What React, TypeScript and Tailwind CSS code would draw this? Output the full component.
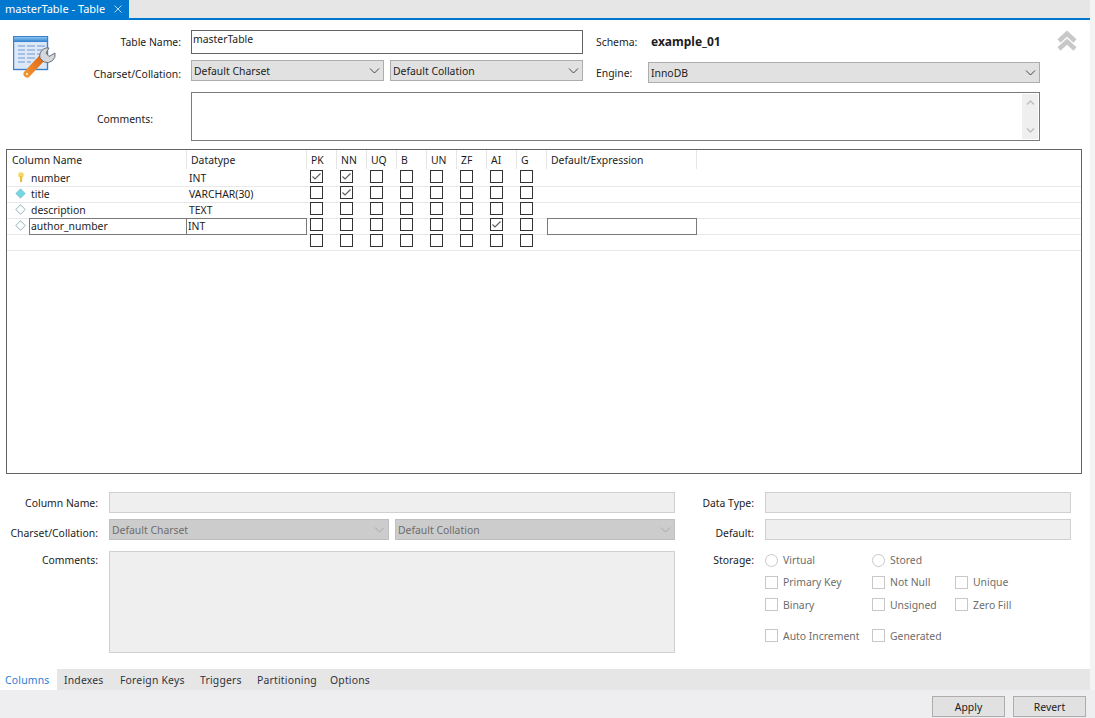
const FLAGS = ['PK', 'NN', 'UQ', 'B', 'UN', 'ZF', 'AI', 'G'];

const ROWS = [
  { name: 'number', type: 'INT', icon: 'key', checked: ['PK', 'NN'] },
  { name: 'title', type: 'VARCHAR(30)', icon: 'filled', checked: ['NN'] },
  { name: 'description', type: 'TEXT', icon: 'hollow', checked: [] },
  { name: 'author_number', type: 'INT', icon: 'hollow', checked: ['AI'], editing: true },
  { name: '', type: '', icon: '', checked: [] },
];

const TABS = [
  { label: 'Columns', cls: 'w-[57px] pl-[5px] bg-white text-[#2b7cd3]' },
  { label: 'Indexes', cls: 'w-[56px] pl-[7px]' },
  { label: 'Foreign Keys', cls: 'w-[80px] pl-[7px]' },
  { label: 'Triggers', cls: 'w-[57px] pl-[7px]' },
  { label: 'Partitioning', cls: 'w-[73px] pl-[7px]' },
  { label: 'Options', cls: 'w-[60px] pl-[7px]' },
];

function Chevron({ color = '#444' }: { color?: string }) {
  return (
    <svg width="11" height="6" viewBox="0 0 11 6" fill="none" stroke={color} strokeWidth="1">
      <path d="M1 0.5 L5.5 5 L10 0.5" />
    </svg>
  );
}

function Select({ label, cls, disabled }: { label: string; cls: string; disabled?: boolean }) {
  return (
    <div
      className={`flex h-[21px] items-center justify-between border pl-[2px] pr-[3px] ${cls} ${
        disabled ? 'border-[#bfbfbf] bg-[#cccccc] text-[#6d6d6d]' : 'border-[#adadad] bg-[#e1e1e1]'
      }`}
    >
      <span>{label}</span>
      <Chevron color={disabled ? '#a8a8a8' : '#444'} />
    </div>
  );
}

function CheckBox({ checked }: { checked?: boolean }) {
  return (
    <div className="h-[13px] w-[13px] border border-[#333333] bg-white">
      {checked && (
        <svg width="11" height="11" viewBox="0 0 11 11" fill="none" stroke="#606060" strokeWidth="1.2">
          <path d="M1.5 5.5 L4 8 L9.5 2.5" />
        </svg>
      )}
    </div>
  );
}

function RowIcon({ kind }: { kind: string }) {
  if (kind === 'key') {
    return (
      <svg width="10" height="11" viewBox="0 0 10 11">
        <circle cx="5" cy="3" r="2.8" fill="#f8d860" />
        <rect x="4" y="4" width="2.2" height="6" fill="#e8c040" />
      </svg>
    );
  }
  if (kind === 'filled') {
    return (
      <svg width="11" height="11" viewBox="0 0 11 11">
        <path d="M5.5 0.8 L10.2 5.5 L5.5 10.2 L0.8 5.5 Z" fill="#70d8e4" stroke="#90bcc8" strokeWidth="0.8" />
      </svg>
    );
  }
  if (kind === 'hollow') {
    return (
      <svg width="11" height="11" viewBox="0 0 11 11">
        <path d="M5.5 0.8 L10.2 5.5 L5.5 10.2 L0.8 5.5 Z" fill="#ffffff" stroke="#86a8b4" strokeWidth="0.9" />
      </svg>
    );
  }
  return null;
}

function TableIcon() {
  return (
    <svg width="44" height="44" viewBox="0 0 44 44">
      <defs>
        <linearGradient id="bar" x1="0" y1="0" x2="0" y2="1">
          <stop offset="0" stopColor="#8cc4f0" />
          <stop offset="1" stopColor="#2f7fd0" />
        </linearGradient>
        <linearGradient id="handle" x1="0" y1="1" x2="1" y2="0">
          <stop offset="0" stopColor="#f09030" />
          <stop offset="1" stopColor="#e06a18" />
        </linearGradient>
      </defs>
      <rect x="0.5" y="0.5" width="34" height="33" fill="#dce8f8" stroke="#3f80cc" strokeWidth="1.4" />
      <rect x="1" y="1" width="33" height="5" fill="url(#bar)" />
      <path d="M5 9h7v2H5zM14 9h8v2h-8zM24 9h8v2h-8zM5 13h7v2H5zM14 13h8v2h-8zM24 13h8v2h-8zM5 17h7v2H5zM14 17h8v2h-8zM24 17h6v2h-6zM5 21h7v2H5zM14 21h8v2h-8zM5 25h7v2H5zM14 25h4v2h-4z" fill="#a4c0e2" />
      <path d="M14 38 L29 22" stroke="url(#handle)" strokeWidth="7" strokeLinecap="round" />
      <circle cx="14" cy="38" r="1.2" fill="#ffe0b0" />
      <path d="M27 22 A8 8 0 0 1 36 12 L33 17 L36 20.5 L42 17 A8 8 0 0 1 31 26 Z" fill="#d4d8dc" stroke="#6c7278" strokeWidth="1" />
    </svg>
  );
}

function FlagOption({ label, cls, radio, tight }: { label: string; cls: string; radio?: boolean; tight?: boolean }) {
  return (
    <div className={`flex h-[13px] items-center text-[#6d6d6d] ${cls}`}>
      <div className={`h-[13px] w-[13px] shrink-0 border border-[#c8c8c8] ${radio ? 'rounded-full' : ''}`} />
      <span className={`ml-[5px] whitespace-nowrap ${tight ? '-mt-[2px]' : ''}`}>{label}</span>
    </div>
  );
}

export default function App() {
  return (
    <div className="flex h-[718px] w-[1095px] flex-col overflow-hidden bg-[#f3f3f3] font-['Noto_Sans',sans-serif] text-[10.4px] leading-[14px] text-[#1c1c1c]">
      <div className="flex h-[690px] w-[1090px] flex-col bg-white">
        {/* document tab */}
        <div className="h-[20px] border-b-2 border-[#0078d0] bg-[#e6e6e6]">
          <div className="flex h-[18px] w-[129px] items-center bg-[#0078d0] pl-[5px] text-[11px] text-white">
            <span>masterTable - Table</span>
            <svg className="ml-[9px]" width="8" height="8" viewBox="0 0 8 8" stroke="#b8d8f0" strokeWidth="1">
              <path d="M0.5 0.5 L7.5 7.5 M7.5 0.5 L0.5 7.5" />
            </svg>
          </div>
        </div>

        {/* table header form */}
        <div className="flex pt-[10px]">
          <div className="w-[94px] shrink-0 pl-[13px] pt-[6px]">
            <TableIcon />
          </div>
          <div className="w-[87px] shrink-0 text-right">
            <div className="flex h-[24px] items-center justify-end">Table Name:</div>
            <div className="mt-[6px] flex h-[21px] items-center justify-end pt-[6px]">Charset/Collation:</div>
            <div className="mt-[11px] flex h-[49px] items-center justify-end pr-[28px] pt-[5px]">Comments:</div>
          </div>
          <div className="ml-[10px]">
            <div className="flex">
              <div className="h-[24px] w-[392px] border border-[#646464] pl-[1px] pt-[1px]">masterTable</div>
              <div className="ml-[13px] flex h-[24px] w-[55px] items-center">Schema:</div>
              <div className="flex h-[24px] items-center text-[12px] font-bold">example_01</div>
              <svg className="ml-[336px] shrink-0" width="20" height="21" viewBox="0 0 20 21" fill="none" stroke="#c8c8c8" strokeWidth="4.5">
                <path d="M2 11 L10 3.5 L18 11" />
                <path d="M2 19 L10 11.5 L18 19" />
              </svg>
            </div>
            <div className="mt-[6px] flex">
              <Select label="Default Charset" cls="w-[193px]" />
              <Select label="Default Collation" cls="ml-[6px] w-[193px]" />
              <div className="ml-[13px] mt-[2px] flex h-[21px] w-[52px] items-center pt-[1px]">Engine:</div>
              <div className="mt-[2px]">
                <Select label="InnoDB" cls="w-[392px]" />
              </div>
            </div>
            <div className="mt-[9px] flex h-[49px] w-[849px] justify-end border border-[#7a7a7a] p-[1px]">
              <div className="flex w-[16px] flex-col items-center justify-between bg-[#efefef] py-[6px]">
                <svg width="9" height="5" viewBox="0 0 9 5" fill="none" stroke="#bdbdbd" strokeWidth="1.4">
                  <path d="M1 4.5 L4.5 1 L8 4.5" />
                </svg>
                <svg width="9" height="5" viewBox="0 0 9 5" fill="none" stroke="#bdbdbd" strokeWidth="1.4">
                  <path d="M1 0.5 L4.5 4 L8 0.5" />
                </svg>
              </div>
            </div>
          </div>
        </div>

        {/* column grid */}
        <div className="ml-[6px] mt-[8px] h-[325px] w-[1076px] border border-[#646464]">
          <div className="flex h-[21px] items-start">
            <div className="flex h-[19px] w-[180px] items-center border-r border-[#e6e6e6] pl-[5px]">Column Name</div>
            <div className="flex h-[19px] w-[120px] items-center border-r border-[#e6e6e6] pl-[4px]">Datatype</div>
            {FLAGS.map((flag) => (
              <div key={flag} className="flex h-[19px] w-[30px] items-center border-r border-[#e6e6e6] pl-[4px]">
                {flag}
              </div>
            ))}
            <div className="flex h-[19px] w-[150px] items-center border-r border-[#e6e6e6] pl-[4px]">Default/Expression</div>
          </div>
          {ROWS.map((row, i) => (
            <div key={i} className="flex h-[16px] border-b border-[#e8e8e8]">
              <div className="flex w-[180px] items-start">
                <div className="flex h-[13px] w-[22px] shrink-0 items-center justify-center pl-[5px]">
                  <RowIcon kind={row.icon} />
                </div>
                {row.editing ? (
                  <div className="-mt-px h-[17px] flex-1 border border-[#7a7a7a] pl-[1px]">{row.name}</div>
                ) : (
                  <div className="pl-[2px]">{row.name}</div>
                )}
              </div>
              {row.editing ? (
                <div className="-ml-px -mt-px h-[17px] w-[121px] border border-[#7a7a7a] pl-[1px]">{row.type}</div>
              ) : (
                <div className="w-[120px] pl-[2px]">{row.type}</div>
              )}
              {FLAGS.map((flag) => (
                <div key={flag} className="-mt-px w-[30px] pl-[3px]">
                  <CheckBox checked={row.checked.includes(flag)} />
                </div>
              ))}
              {row.editing && <div className="-mt-px h-[17px] w-[150px] border border-[#7a7a7a]" />}
            </div>
          ))}
        </div>

        {/* column details form */}
        <div className="mt-[18px] flex">
          <div className="w-[675px] shrink-0">
            <div className="flex">
              <div className="flex h-[21px] w-[99px] items-center justify-end pr-[1px] pt-[1px]">Column Name:</div>
              <div className="ml-[10px] h-[21px] w-[566px] border border-[#d0d0d0] bg-[#efefef]" />
            </div>
            <div className="mt-[6px] flex">
              <div className="flex h-[21px] w-[99px] items-center justify-end pr-[1px] pt-[6px]">Charset/Collation:</div>
              <Select label="Default Charset" cls="ml-[10px] w-[280px]" disabled />
              <Select label="Default Collation" cls="ml-[6px] w-[280px]" disabled />
            </div>
            <div className="mt-[11px] flex">
              <div className="w-[99px] pr-[1px] pt-[2px] text-right">Comments:</div>
              <div className="ml-[10px] h-[102px] w-[566px] border border-[#d0d0d0] bg-[#efefef]" />
            </div>
          </div>
          <div className="flex-1">
            <div className="flex">
              <div className="flex h-[21px] w-[79px] items-center justify-end pt-[1px]">Data Type:</div>
              <div className="ml-[11px] h-[21px] w-[306px] border border-[#d0d0d0] bg-[#efefef]" />
            </div>
            <div className="mt-[6px] flex">
              <div className="flex h-[21px] w-[79px] items-center justify-end pt-[6px]">Default:</div>
              <div className="ml-[11px] h-[21px] w-[306px] border border-[#d0d0d0] bg-[#efefef]" />
            </div>
            <div className="mt-[14px] flex">
              <div className="flex h-[13px] w-[79px] items-center justify-end pb-[2px]">Storage:</div>
              <div className="ml-[11px]">
                <div className="flex">
                  <FlagOption radio tight label="Virtual" cls="w-[107px]" />
                  <FlagOption radio tight label="Stored" cls="w-[83px]" />
                </div>
                <div className="mt-[9px] flex">
                  <FlagOption tight label="Primary Key" cls="w-[107px]" />
                  <FlagOption tight label="Not Null" cls="w-[83px]" />
                  <FlagOption tight label="Unique" cls="w-[83px]" />
                </div>
                <div className="mt-[9px] flex">
                  <FlagOption label="Binary" cls="w-[107px]" />
                  <FlagOption label="Unsigned" cls="w-[83px]" />
                  <FlagOption label="Zero Fill" cls="w-[83px]" />
                </div>
                <div className="mt-[18px] flex">
                  <FlagOption label="Auto Increment" cls="w-[107px]" />
                  <FlagOption label="Generated" cls="w-[83px]" />
                </div>
              </div>
            </div>
          </div>
        </div>

        {/* editor tabs */}
        <div className="mt-auto flex h-[21px] bg-[#e6e6e6] text-[#2f3340]">
          {TABS.map((tab) => (
            <div key={tab.label} className={`flex items-center whitespace-nowrap tracking-[0.2px] ${tab.cls}`}>
              {tab.label}
            </div>
          ))}
        </div>
      </div>

      {/* bottom buttons */}
      <div className="flex h-[28px] justify-end bg-[#eeeef0] pr-[9px] pt-[6px]">
        <button className="h-[21px] w-[73px] border border-[#adadad] bg-[#e1e1e1]">Apply</button>
        <button className="ml-[8px] h-[21px] w-[73px] border border-[#adadad] bg-[#e1e1e1]">Revert</button>
      </div>
    </div>
  );
}
